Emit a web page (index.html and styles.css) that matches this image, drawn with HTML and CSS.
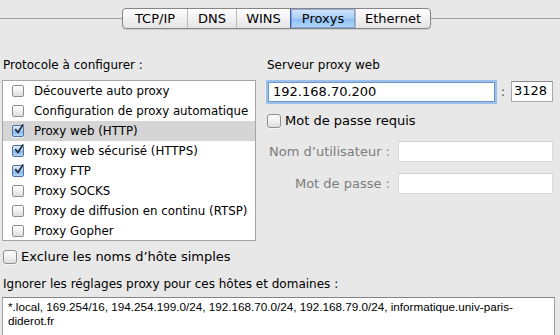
FILE: index.html
```html
<!DOCTYPE html>
<html lang="fr">
<head>
    <meta charset="UTF-8">
    <title>Réseau - Proxys</title>
    <link rel="stylesheet" href="styles.css">
</head>
<body>
    <!-- Tab bar -->
    <nav class="tabbar">
        <div class="tabbar-line left"></div>
        <div class="tabs">
            <div class="tab tab-tcp">TCP/IP</div>
            <div class="tab tab-dns">DNS</div>
            <div class="tab tab-wins">WINS</div>
            <div class="tab tab-proxys selected">Proxys</div>
            <div class="tab tab-eth">Ethernet</div>
        </div>
        <div class="tabbar-line right"></div>
    </nav>

    <main class="panel">
        <section class="col-left">
            <h2 class="heading">Protocole à configurer :</h2>
            <ul class="protocol-list">
                <li class="row"><span class="cb"></span>Découverte auto proxy</li>
                <li class="row"><span class="cb"></span>Configuration de proxy automatique</li>
                <li class="row selected"><span class="cb checked"><svg viewBox="0 0 14 14"><path d="M3 6.5 L5.8 10 L11.5 1" /></svg></span>Proxy web (HTTP)</li>
                <li class="row"><span class="cb checked"><svg viewBox="0 0 14 14"><path d="M3 6.5 L5.8 10 L11.5 1" /></svg></span>Proxy web sécurisé (HTTPS)</li>
                <li class="row"><span class="cb checked"><svg viewBox="0 0 14 14"><path d="M3 6.5 L5.8 10 L11.5 1" /></svg></span>Proxy FTP</li>
                <li class="row"><span class="cb"></span>Proxy SOCKS</li>
                <li class="row"><span class="cb"></span>Proxy de diffusion en continu (RTSP)</li>
                <li class="row"><span class="cb"></span>Proxy Gopher</li>
            </ul>
        </section>

        <section class="col-right">
            <h2 class="heading">Serveur proxy web</h2>
            <div class="server-row">
                <div class="field host focused">192.168.70.200</div>
                <span class="colon">:</span>
                <div class="field port">3128</div>
            </div>
            <label class="check-line pw-required"><span class="cb big"></span>Mot de passe requis</label>
            <div class="auth-grid">
                <span class="auth-label">Nom d’utilisateur :</span>
                <div class="field auth"></div>
                <span class="auth-label">Mot de passe :</span>
                <div class="field auth"></div>
            </div>
        </section>
    </main>

    <section class="bottom">
        <label class="check-line exclude"><span class="cb big"></span>Exclure les noms d’hôte simples</label>
        <h2 class="heading bypass-title">Ignorer les réglages proxy pour ces hôtes et domaines :</h2>
        <div class="bypass-box">*.local, 169.254/16, 194.254.199.0/24, 192.168.70.0/24, 192.168.79.0/24, informatique.univ-paris-diderot.fr</div>
    </section>
</body>
</html>
```

FILE: styles.css
```css
/* General Styles */
* {
    margin: 0;
    padding: 0;
    box-sizing: border-box;
}

body {
    font-family: "DejaVu Sans", sans-serif;
    font-size: 12px;
    background: #e8e8e8;
    color: #000;
    width: 560px;
    height: 335px;
    overflow: hidden;
}

.heading {
    font-size: 12px;
    font-weight: normal;
    line-height: 16px;
}

/* Tabs */
.tabbar {
    display: flex;
    align-items: center;
    padding-top: 8px;
}

.tabbar-line {
    height: 1px;
    background: #9c9c9c;
}

.tabbar-line.left {
    width: 122px;
}

.tabbar-line.right {
    flex: 1;
}

.tabs {
    display: flex;
    height: 21px;
    border: 1px solid #858585;
    border-radius: 4px;
    background: linear-gradient(#ffffff, #f1f1f1 50%, #e4e4e4);
    box-shadow: 0 1px 1px rgba(0, 0, 0, 0.12);
    overflow: hidden;
}

.tab {
    font-size: 13px;
    line-height: 19px;
    text-align: center;
    border-left: 1px solid #b9b9b9;
}

.tab:first-child {
    border-left: none;
}

.tab-tcp { width: 64px; }
.tab-dns { width: 49px; }
.tab-wins { width: 54px; }
.tab-proxys { width: 65px; }
.tab-eth { width: 75px; }

.tab.selected {
    background: linear-gradient(#d3e6fb, #a8cdf5 50%, #8abdf2 51%, #b5d8fa);
    border-left-color: #3b5fa8;
    box-shadow: inset 0 0 0 1px rgba(40, 70, 160, 0.35);
}

/* Main panel */
.panel {
    display: grid;
    grid-template-columns: 254px 287px;
    column-gap: 11px;
    padding-left: 2px;
    margin-top: 28px;
}

.col-left .heading {
    padding-left: 1px;
}

.protocol-list {
    list-style: none;
    margin-top: 7px;
    background: #fff;
    border: 1px solid #a5a5a5;
    height: 161px;
}

.row {
    display: flex;
    align-items: center;
    height: 20px;
    padding-left: 9px;
    gap: 10px;
    white-space: nowrap;
    font-size: 11.8px;
}

.row.selected {
    background: #d5d5d5;
}

/* Checkboxes */
.cb {
    flex: none;
    width: 12px;
    height: 12px;
    border: 1px solid #8e8e8e;
    border-radius: 2px;
    background: linear-gradient(#ffffff, #f0f0f0 50%, #dedede);
    box-shadow: 0 1px 0 rgba(255, 255, 255, 0.6);
    position: relative;
}

.cb.big {
    width: 14px;
    height: 14px;
    border-radius: 3px;
}

.cb.checked {
    border-color: #50709e;
    background: linear-gradient(#e2eefb, #a9cbf0 50%, #7fb2ea 51%, #b8d8f8);
}

.cb svg {
    position: absolute;
    left: 0;
    top: -2px;
    width: 12px;
    height: 12px;
    overflow: visible;
}

.cb svg path {
    fill: none;
    stroke: #1d2a3a;
    stroke-width: 2;
    stroke-linecap: round;
    stroke-linejoin: round;
}

/* Right column */
.col-right {
    display: flex;
    flex-direction: column;
}

.server-row {
    display: flex;
    align-items: center;
    margin-top: 8px;
    padding-left: 1px;
}

.field {
    background: #fff;
    border: 1px solid #a8a8a8;
    border-top-color: #8a8a8a;
    font-size: 13px;
    line-height: 18px;
    padding-left: 4px;
}

.field.host {
    width: 227px;
    height: 20px;
}

.field.focused {
    border-color: #6b95c8;
    box-shadow: 0 0 0 2px #9cc0ea;
}

.colon {
    width: 16px;
    text-align: center;
    color: #444;
}

.field.port {
    width: 42px;
    height: 21px;
    padding-left: 2px;
}

.check-line {
    display: flex;
    align-items: center;
    gap: 4px;
    font-size: 13px;
    line-height: 16px;
}

.pw-required {
    margin-top: 11px;
}

.auth-grid {
    display: grid;
    grid-template-columns: 123px 155px;
    column-gap: 8px;
    row-gap: 11px;
    align-items: center;
    margin-top: 12px;
}

.auth-label {
    text-align: right;
    color: #7c7c7c;
    font-size: 13px;
}

.field.auth {
    height: 21px;
    border-color: #dadada;
    border-top-color: #cfcfcf;
}

/* Bottom */
.bottom {
    padding-left: 3px;
    margin-top: 8px;
}

.bypass-title {
    margin-top: 11px;
}

.bypass-box {
    margin: 5px 5px 0 -1px;
    height: 50px;
    background: #fff;
    border: 1px solid #a0a0a0;
    border-top-color: #858585;
    font-family: "Liberation Sans", Arial, sans-serif;
    font-size: 11.7px;
    line-height: 14px;
    padding: 2px 5px;
}
```
